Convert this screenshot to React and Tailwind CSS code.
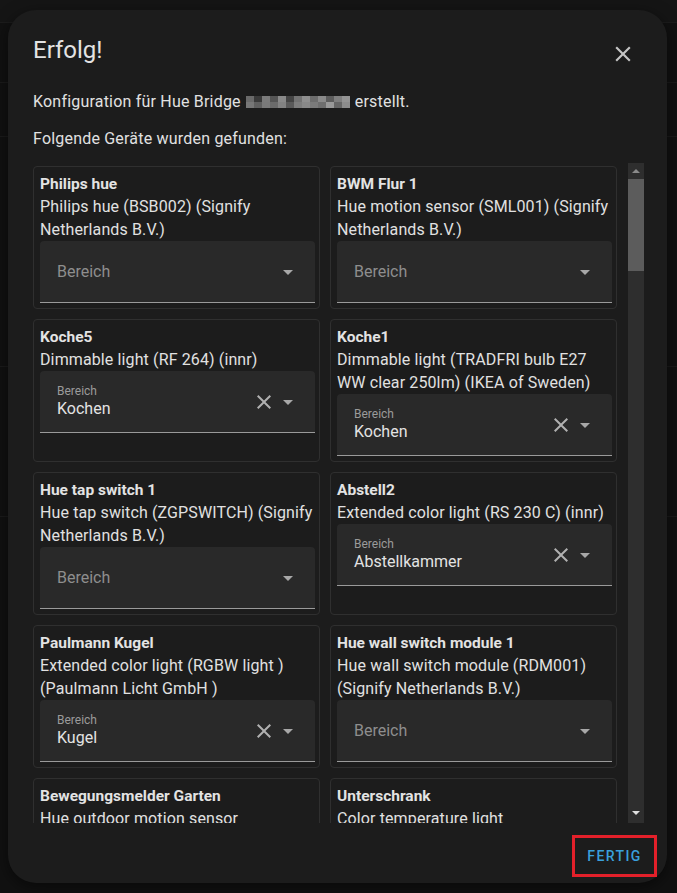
import React from "react";

const devices = [
  { name: "Philips hue", desc: "Philips hue (BSB002) (Signify Netherlands B.V.)", area: "" },
  { name: "BWM Flur 1", desc: "Hue motion sensor (SML001) (Signify Netherlands B.V.)", area: "" },
  { name: "Koche5", desc: "Dimmable light (RF 264) (innr)", area: "Kochen" },
  { name: "Koche1", desc: "Dimmable light (TRADFRI bulb E27 WW clear 250lm) (IKEA of Sweden)", area: "Kochen" },
  { name: "Hue tap switch 1", desc: "Hue tap switch (ZGPSWITCH) (Signify Netherlands B.V.)", area: "" },
  { name: "Abstell2", desc: "Extended color light (RS 230 C) (innr)", area: "Abstellkammer" },
  { name: "Paulmann Kugel", desc: "Extended color light (RGBW light ) (Paulmann Licht GmbH )", area: "Kugel" },
  { name: "Hue wall switch module 1", desc: "Hue wall switch module (RDM001) (Signify Netherlands B.V.)", area: "" },
  { name: "Bewegungsmelder Garten", desc: "Hue outdoor motion sensor\n(SML002) (Signify Netherlands B.V.)", area: "" },
  { name: "Unterschrank", desc: "Color temperature light\n(TRADFRI bulb GU10 WS 400lm) (IKEA of Sweden)", area: "" },
];

// pixelated (blurred) bridge id
const mosaic = [
  "bg-[#6a6a6a]", "bg-[#3a3a3a]", "bg-[#7b7b7b]", "bg-[#555]", "bg-[#8a8a8a]", "bg-[#444]", "bg-[#737373]",
  "bg-[#8f8f8f]", "bg-[#6d6d6d]", "bg-[#8a8a8a]", "bg-[#5c5c5c]", "bg-[#7f7f7f]", "bg-[#949494]",
  "bg-[#777]", "bg-[#606060]", "bg-[#7a7a7a]", "bg-[#6b6b6b]", "bg-[#838383]", "bg-[#5a5a5a]", "bg-[#7d7d7d]",
  "bg-[#888]", "bg-[#7a7a7a]", "bg-[#6e6e6e]", "bg-[#999]", "bg-[#666]", "bg-[#8c8c8c]",
];

function CloseIcon({ size = 24, className = "" }) {
  return (
    <svg width={size} height={size} viewBox="0 0 24 24" className={className} fill="currentColor">
      <path d="M19 6.41 17.59 5 12 10.59 6.41 5 5 6.41 10.59 12 5 17.59 6.41 19 12 13.41 17.59 19 19 17.59 13.41 12z" />
    </svg>
  );
}

function ArrowDrop() {
  return (
    <svg width="24" height="24" viewBox="0 0 24 24" fill="currentColor" className="text-[#a8a8a8]">
      <path d="M7 10l5 5 5-5z" />
    </svg>
  );
}

function AreaSelect({ value }) {
  return (
    <div className="flex h-[62px] items-center rounded-t-[4px] border-b border-[#9a9a9a] bg-[#292929] pl-[17px] pr-[15px]">
      {value ? (
        <div className="flex-1">
          <div className="text-[12px] leading-[14px] text-[#9b9b9b]">Bereich</div>
          <div className="text-[16px] leading-[21px] text-[#e3e3e3]">{value}</div>
        </div>
      ) : (
        <div className="flex-1 text-[16px] text-[#8e8e8e]">Bereich</div>
      )}
      {value && <CloseIcon className="text-[#b0b0b0]" />}
      <ArrowDrop />
    </div>
  );
}

function DeviceCard({ d }) {
  return (
    <div className="rounded-[4px] border border-[#2f2f2f] pb-[5px] pl-[6px] pr-[4px] pt-[6px]">
      <div className="text-[15.5px] font-bold leading-[22px] text-[#e3e3e3]">{d.name}</div>
      <div className="whitespace-pre-line text-[16px] leading-[23px] tracking-[0.12px] text-[#e1e1e1]">{d.desc}</div>
      <AreaSelect value={d.area} />
    </div>
  );
}

export default function App() {
  return (
    <div className="relative h-[893px] w-[677px] overflow-hidden bg-[#111111] font-['Roboto',sans-serif]">
      {/* dimmed page behind the dialog */}
      <div className="h-[23px] border-b border-[#1c1c1c] bg-[#151515]" />
      <div className="h-[60px] border-b border-[#1b1b1b]" />
      <div className="h-[54px] border-b border-[#1b1b1b]" />
      <div className="h-[230px] border-b border-[#1b1b1b]" />
      <div className="h-[150px] border-b border-[#1b1b1b]" />

      <div className="absolute left-[8px] top-[10px] flex h-[873px] w-[659px] flex-col rounded-[28px] bg-[#1c1c1c] shadow-[0_4px_16px_rgba(0,0,0,0.5)]">
        <div className="flex items-start justify-between pl-[25px] pr-[31px] pt-[24px]">
          <h2 className="text-[24px] leading-[32px] text-[#e3e3e3]">Erfolg!</h2>
          <CloseIcon size={26} className="mt-[7px] text-[#c4c4c4]" />
        </div>

        <div className="px-[25px] text-[16px] leading-[22px] tracking-[0.2px] text-[#e1e1e1]">
          <p className="mt-[24px] flex items-center">
            Konfiguration für Hue Bridge
            <span className="mx-[5px] inline-grid grid-cols-[repeat(13,8px)] grid-rows-[6px_6px]">
              {mosaic.map((c, i) => (
                <span key={i} className={c} />
              ))}
            </span>
            erstellt.
          </p>
          <p className="mt-[15px]">Folgende Geräte wurden gefunden:</p>
        </div>

        <div className="ml-[25px] mt-[13px] flex h-[660px] gap-[11px]">
          <div className="h-full w-[584px] overflow-hidden pt-[3px]">
            <div className="grid grid-cols-2 gap-[10px]">
              {devices.map((d) => (
                <DeviceCard key={d.name} d={d} />
              ))}
            </div>
          </div>
          {/* scrollbar */}
          <div className="flex h-full w-[16px] flex-col items-center bg-[#2e2e2e]">
            <div className="flex h-[16px] items-center justify-center">
              <div className="h-0 w-0 border-x-[4px] border-b-[4px] border-x-transparent border-b-[#8a8a8a]" />
            </div>
            <div className="h-[92px] w-[16px] bg-[#5c5c5c]" />
            <div className="flex-1" />
            <div className="flex h-[20px] items-center justify-center">
              <div className="h-0 w-0 border-x-[4px] border-t-[4px] border-x-transparent border-t-[#e0e0e0]" />
            </div>
          </div>
        </div>

        <div className="mr-[10px] mt-[12px] flex justify-end">
          <div className="flex h-[42px] w-[85px] items-center justify-center border-[3px] border-[#e3202a]">
            <span className="text-[14px] font-medium tracking-[1.4px] text-[#3aa0dc]">FERTIG</span>
          </div>
        </div>
      </div>
    </div>
  );
}
